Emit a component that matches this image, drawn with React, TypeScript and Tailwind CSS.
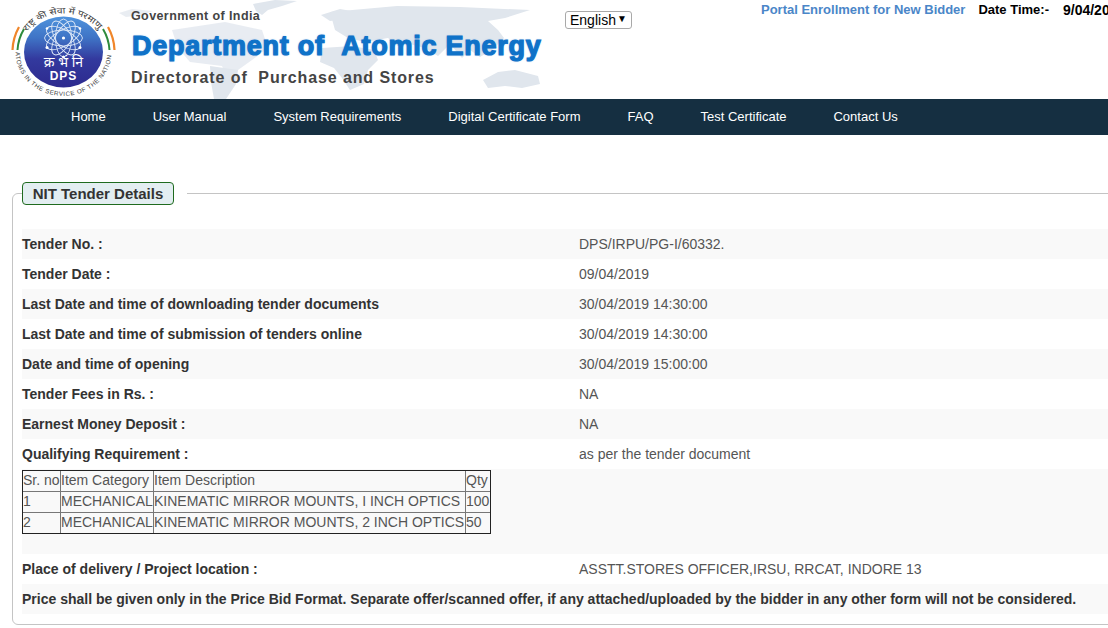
import React from "react";

const FONT = "font-['Liberation_Sans',Arial,sans-serif]";

function Logo() {
  const hindi = "'Noto Sans','Noto Sans Devanagari','Liberation Sans',sans-serif";
  const rosette = [0, 30, 60, 90, 120, 150];
  return (
    <svg width="125" height="99" viewBox="0 0 125 99" className="shrink-0">
      <defs>
        <linearGradient id="disc" x1="0" y1="0" x2="0" y2="1">
          <stop offset="0%" stopColor="#4f93dc" />
          <stop offset="30%" stopColor="#3f74c6" />
          <stop offset="60%" stopColor="#33399e" />
          <stop offset="100%" stopColor="#2d2a8e" />
        </linearGradient>
        <path id="topArc" d="M27 31.7 A43 38.5 0 0 1 100 31.7" fill="none" />
        <path id="botArc" d="M15.5 52 A48 44 0 0 0 111.5 52" fill="none" />
      </defs>
      <ellipse cx="63.5" cy="52" rx="39.5" ry="35.5" fill="url(#disc)" />
      <g fill="none" stroke="#dfe9f8" strokeWidth="0.9">
        {rosette.map((a) => (
          <ellipse key={a} cx="63.5" cy="38" rx="8" ry="19" transform={`rotate(${a} 63.5 38)`} />
        ))}
      </g>
      <g fill="#ffffff">
        <circle cx="63.5" cy="57" r="1.5" />
        <circle cx="47" cy="47.5" r="1.5" />
        <circle cx="80" cy="47.5" r="1.5" />
        <circle cx="63.5" cy="38" r="1.6" />
        <circle cx="47" cy="28.5" r="1.3" />
        <circle cx="80" cy="28.5" r="1.3" />
      </g>
      <path d="M12.5 50 A51 51 0 0 1 19 27" fill="none" stroke="#f0862a" strokeWidth="2.2" />
      <path d="M17.5 50 A46 46 0 0 1 24 29" fill="none" stroke="#2e8b3c" strokeWidth="2" />
      <path d="M114.5 50 A51 51 0 0 0 108 27" fill="none" stroke="#f0862a" strokeWidth="2.2" />
      <path d="M109.5 50 A46 46 0 0 0 103 29" fill="none" stroke="#2e8b3c" strokeWidth="2" />
      <text x="63.5" y="67" textAnchor="middle" fill="#fff" fontSize="14" fontFamily={hindi}>क्र भं नि</text>
      <text x="63.5" y="80" textAnchor="middle" fill="#fff" fontSize="12" letterSpacing="1" fontWeight="700" fontFamily="'Liberation Sans',sans-serif">DPS</text>
      <text fill="#3a3a3a" fontSize="8.5" fontFamily={hindi}>
        <textPath href="#topArc" textLength="82" lengthAdjust="spacingAndGlyphs">राष्ट्र की सेवा में परमाणु</textPath>
      </text>
      <text fill="#3a3a3a" fontSize="6.2" fontFamily="'Liberation Sans',sans-serif">
        <textPath href="#botArc" textLength="141">ATOMS IN THE SERVICE OF THE NATION</textPath>
      </text>
    </svg>
  );
}

function WorldMap() {
  return (
    <svg className="absolute left-0 top-0" width="560" height="99" viewBox="0 0 560 99" fill="#e0e6ed">
      <path d="M119 13 L132 9 L153 11 L142 15 L126 17 Z" opacity="0.7" />
      <path d="M253 4 L275 0 L297 1 L282 6 L268 10 L262 15 L256 11 Z" />
      <path d="M321 15 L340 9 L357 12 L348 19 L330 21 Z" />
      <path d="M172 30 L225 22 L262 30 L268 48 L252 60 L238 70 L226 76 L222 66 L190 62 L178 48 Z" opacity="0.75" />
      <path d="M210 66 L238 70 L236 84 L226 99 L214 99 L211 82 Z" />
      <path d="M330 12 L397 6 L460 7 L530 10 L505 18 L488 21 L498 30 L504 38 L492 50 L480 57 L470 50 L462 58 L450 44 L438 56 L425 48 L410 44 L398 46 L388 38 L365 42 L348 38 L335 30 Z" />
      <path d="M322 48 L352 46 L374 50 L378 60 L368 70 L364 84 L350 90 L342 78 L334 68 L320 62 Z" />
      <path d="M483 80 L498 72 L515 70 L538 76 L540 84 L522 88 L505 86 L488 88 Z" />
    </svg>
  );
}

function Row({ label, value, shade }: { label: string; value: string; shade: boolean }) {
  return (
    <div className={`grid h-[30px] grid-cols-[557px_1fr] items-center ${shade ? "bg-[#f9f9f9]" : "bg-white"}`}>
      <div className="text-[14px] font-bold text-[#333]">{label}</div>
      <div className="text-[14px] text-[#555]">{value}</div>
    </div>
  );
}

const cell = "border border-[#777] px-0 pb-[2px] text-left font-normal";

function ItemsTable() {
  return (
    <table className="border-collapse text-[14px] leading-[18px] text-[#555] outline outline-1 -outline-offset-1 outline-[#222]">
      <thead>
        <tr className="h-[21px]">
          <th className={`${cell} w-[38px]`}>Sr. no</th>
          <th className={`${cell} w-[93px]`}>Item Category</th>
          <th className={`${cell} w-[312px]`}>Item Description</th>
          <th className={`${cell} w-[25px]`}>Qty</th>
        </tr>
      </thead>
      <tbody>
        <tr className="h-[21px]">
          <td className={cell}>1</td>
          <td className={cell}>MECHANICAL</td>
          <td className={cell}>KINEMATIC MIRROR MOUNTS, I INCH OPTICS</td>
          <td className={cell}>100</td>
        </tr>
        <tr className="h-[21px]">
          <td className={cell}>2</td>
          <td className={cell}>MECHANICAL</td>
          <td className={cell}>KINEMATIC MIRROR MOUNTS, 2 INCH OPTICS</td>
          <td className={cell}>50</td>
        </tr>
      </tbody>
    </table>
  );
}

export default function App() {
  const nav = ["Home", "User Manual", "System Requirements", "Digital Certificate Form", "FAQ", "Test Certificate", "Contact Us"];
  const rows = [
    ["Tender No. :", "DPS/IRPU/PG-I/60332."],
    ["Tender Date :", "09/04/2019"],
    ["Last Date and time of downloading tender documents", "30/04/2019 14:30:00"],
    ["Last Date and time of submission of tenders online", "30/04/2019 14:30:00"],
    ["Date and time of opening", "30/04/2019 15:00:00"],
    ["Tender Fees in Rs. :", "NA"],
    ["Earnest Money Deposit :", "NA"],
    ["Qualifying Requirement :", "as per the tender document"],
  ];
  return (
    <div className={`h-[628px] w-[1108px] overflow-hidden bg-white ${FONT}`}>
      <header className="relative flex h-[99px] overflow-hidden">
        <WorldMap />
        <div className="relative flex w-[565px] shrink-0">
          <Logo />
          <div className="ml-[6px] flex flex-col">
            <div className="mt-[9px] text-[12.5px] font-bold leading-[15px] tracking-[0.4px] text-[#444]">Government of India</div>
            <div className="mt-[4px] ml-[1px] whitespace-nowrap text-[27px] font-bold leading-[36px] tracking-[0.75px] text-[#0f72c8] [-webkit-text-stroke:1.2px_#0f72c8] [text-shadow:0_0_2px_#6aaae6]">
              Department of&nbsp;&nbsp;Atomic Energy
            </div>
            <div className="mt-[3px] whitespace-nowrap text-[16px] font-bold leading-[22px] tracking-[0.9px] text-[#444]">Directorate of&nbsp;&nbsp;Purchase and Stores</div>
          </div>
        </div>
        <div className="relative mt-[11px] h-[18px] w-[67px] shrink-0 self-start">
          <select className="block h-[18px] w-[67px] appearance-none rounded-[3px] border border-[#a9a9a9] bg-white pl-[4px] text-[14px] leading-[16px] text-black">
            <option>English</option>
          </select>
          <span className="pointer-events-none absolute left-[52px] top-[1px] text-[10px] leading-[14px] text-black">▼</span>
        </div>
        <div className="relative ml-[129px] mt-[1px] flex shrink-0 items-start whitespace-nowrap font-bold">
          <span className="text-[13px] leading-[17px] text-[#4a86c8]">Portal Enrollment for New Bidder</span>
          <span className="ml-[13px] text-[13px] leading-[17px] text-black">Date Time:-</span>
          <span className="ml-[14px] text-[14px] leading-[18px] text-black">9/04/2019</span>
        </div>
      </header>

      <nav className="flex h-[36px] items-center gap-[47px] bg-[#152f41] pb-[1px] pl-[71px] text-[13px] text-white">
        {nav.map((n) => (
          <span key={n} className="whitespace-nowrap">{n}</span>
        ))}
      </nav>

      <fieldset className="ml-[12px] mr-[-30px] mt-[47px] rounded-[6px] border border-[#c4c4c4] pb-[10px] pl-[9px]">
        <legend className="pr-[13px]">
          <span className="flex h-[23px] w-[152px] items-center justify-center rounded-[4px] border border-[#1f6b1f] bg-[#e3eef1] pt-[1px] text-[15px] font-bold text-[#333]">
            NIT Tender Details
          </span>
        </legend>
        <div className="mt-[24px]">
          {rows.map(([l, v], i) => (
            <Row key={l} label={l} value={v} shade={i % 2 === 0} />
          ))}
          <div className="h-[85px] bg-[#f9f9f9] pt-[1px]">
            <ItemsTable />
          </div>
          <Row label="Place of delivery / Project location :" value="ASSTT.STORES OFFICER,IRSU, RRCAT, INDORE 13" shade={false} />
          <div className="flex h-[30px] items-center whitespace-nowrap bg-[#f9f9f9] text-[14px] font-bold text-[#333]">
            Price shall be given only in the Price Bid Format. Separate offer/scanned offer, if any attached/uploaded by the bidder in any other form will not be considered.
          </div>
        </div>
      </fieldset>
    </div>
  );
}
